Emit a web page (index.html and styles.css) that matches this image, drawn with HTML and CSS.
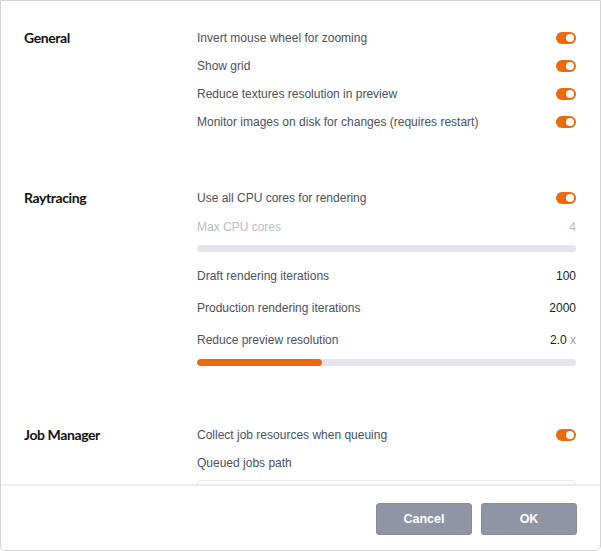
FILE: index.html
```html
<!DOCTYPE html>
<html lang="en">
<head>
    <meta charset="UTF-8">
    <title>Preferences</title>
    <link rel="stylesheet" href="styles.css">
</head>
<body>
    <div class="dialog">
        <div class="content">
            <div class="section">
                <h2 class="section-title">General</h2>
                <div class="section-body">
                    <div class="row">
                        <span class="label">Invert mouse wheel for zooming</span>
                        <span class="toggle on"></span>
                    </div>
                    <div class="row">
                        <span class="label">Show grid</span>
                        <span class="toggle on"></span>
                    </div>
                    <div class="row">
                        <span class="label">Reduce textures resolution in preview</span>
                        <span class="toggle on"></span>
                    </div>
                    <div class="row">
                        <span class="label">Monitor images on disk for changes (requires restart)</span>
                        <span class="toggle on"></span>
                    </div>
                </div>
            </div>

            <div class="section">
                <h2 class="section-title">Raytracing</h2>
                <div class="section-body">
                    <div class="row">
                        <span class="label">Use all CPU cores for rendering</span>
                        <span class="toggle on"></span>
                    </div>
                    <div class="row row-slider disabled">
                        <span class="label">Max CPU cores</span>
                        <span class="value">4</span>
                    </div>
                    <div class="slider slider-first"><div class="slider-fill" style="width: 0%"></div></div>
                    <div class="row row-value">
                        <span class="label">Draft rendering iterations</span>
                        <span class="value">100</span>
                    </div>
                    <div class="row row-value">
                        <span class="label">Production rendering iterations</span>
                        <span class="value">2000</span>
                    </div>
                    <div class="row row-value">
                        <span class="label">Reduce preview resolution</span>
                        <span class="value">2.0 <span class="unit">x</span></span>
                    </div>
                    <div class="slider"><div class="slider-fill" style="width: 33%"></div></div>
                </div>
            </div>

            <div class="section">
                <h2 class="section-title">Job Manager</h2>
                <div class="section-body">
                    <div class="row">
                        <span class="label">Collect job resources when queuing</span>
                        <span class="toggle on"></span>
                    </div>
                    <div class="row">
                        <span class="label">Queued jobs path</span>
                    </div>
                    <input type="text" class="path-input">
                </div>
            </div>
        </div>

        <div class="footer">
            <button class="btn">Cancel</button>
            <button class="btn">OK</button>
        </div>
    </div>
</body>
</html>
```

FILE: styles.css
```css
/* Base */
body {
    margin: 0;
    font-family: 'Liberation Sans', Arial, sans-serif;
    background-color: #fff;
}

.dialog {
    width: 601px;
    height: 551px;
    box-sizing: border-box;
    border: 1px solid #d4d4d6;
    border-radius: 0 0 5px 5px;
    display: flex;
    flex-direction: column;
    overflow: hidden;
}

.content {
    flex: 1;
    overflow: hidden;
    margin-top: -1px;
}

/* Sections */
.section {
    display: flex;
    padding: 24px 24px 24px 23px;
}

.section-title {
    width: 173px;
    margin: 0;
    font-family: Lato, 'Open Sans', sans-serif;
    font-size: 14px;
    font-weight: 700;
    line-height: 28px;
    color: #111;
    letter-spacing: -0.4px;
}

.section-body {
    flex: 1;
}

.row {
    height: 28px;
    display: flex;
    align-items: center;
    justify-content: space-between;
    font-size: 12px;
}

.row-slider {
    height: 30px;
}

.row-value {
    height: 32px;
}

.label {
    color: #4a5062;
}

.value {
    color: #1a1a1a;
}

.unit {
    color: #9a9ca5;
}

.disabled .label,
.disabled .value {
    color: #b9bbc1;
}

/* Toggle */
.toggle {
    position: relative;
    width: 20px;
    height: 12px;
    border-radius: 6px;
    background-color: #e5e6ea;
}

.toggle.on {
    background-color: #ea6a0c;
}

.toggle::after {
    content: '';
    position: absolute;
    top: 2px;
    left: 2px;
    width: 8px;
    height: 8px;
    border-radius: 50%;
    background-color: #fff;
}

.toggle.on::after {
    left: 10px;
}

/* Slider */
.slider {
    height: 7px;
    border-radius: 4px;
    background-color: #e4e5ea;
    margin: 3px 0 7px;
    overflow: hidden;
}

.slider-first {
    margin: 3px 0 8px;
}

.slider-fill {
    height: 100%;
    border-radius: 4px;
    background-color: #ea6a0c;
}

/* Input */
.path-input {
    display: block;
    width: 100%;
    height: 30px;
    margin-top: 3px;
    box-sizing: border-box;
    border: 1px solid #e6e7ea;
    border-radius: 4px;
    font-family: inherit;
}

/* Footer */
.footer {
    display: flex;
    justify-content: flex-end;
    gap: 9px;
    padding: 17px 23px 15px;
    border-top: 2px solid #ebebed;
}

.btn {
    width: 96px;
    height: 32px;
    border: 1px solid #868c9a;
    border-radius: 3px;
    background-color: #8f95a4;
    color: #fff;
    font-family: 'Liberation Sans', Arial, sans-serif;
    font-size: 12.5px;
    font-weight: 700;
    cursor: pointer;
}
```
